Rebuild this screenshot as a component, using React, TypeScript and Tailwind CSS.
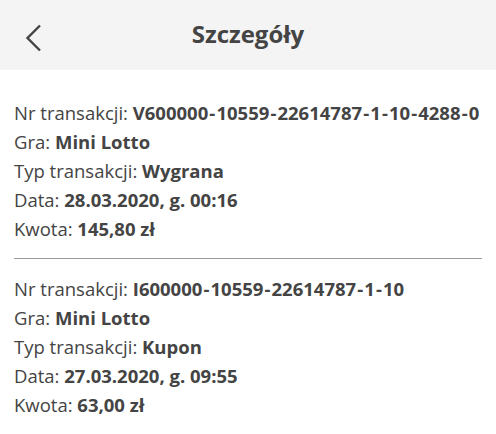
import React from "react";

const rows1: [string, string][] = [
  ["Nr transakcji: ", "V600000-10559-22614787-1-10-4288-0"],
  ["Gra: ", "Mini Lotto"],
  ["Typ transakcji: ", "Wygrana"],
  ["Data: ", "28.03.2020, g. 00:16"],
  ["Kwota: ", "145,80 zł"],
];
const rows2: [string, string][] = [
  ["Nr transakcji: ", "I600000-10559-22614787-1-10"],
  ["Gra: ", "Mini Lotto"],
  ["Typ transakcji: ", "Kupon"],
  ["Data: ", "27.03.2020, g. 09:55"],
  ["Kwota: ", "63,00 zł"],
];

function Value({ v }: { v: string }) {
  const parts = v.split("-");
  return (
    <span className="font-bold">
      {parts.map((p, i) => (
        <React.Fragment key={i}>
          {i > 0 && <span className="mx-[1.1px]">-</span>}
          {p}
        </React.Fragment>
      ))}
    </span>
  );
}

function Block({ rows }: { rows: [string, string][] }) {
  return (
    <div className="flex flex-col">
      {rows.map(([l, v], i) => (
        <div key={i} className="text-[18.5px] leading-[29px] whitespace-nowrap">
          {l}
          <Value v={v} />
        </div>
      ))}
    </div>
  );
}

export default function App() {
  return (
    <div
      className="w-[496px] h-[434px] bg-white text-[#444444]"
      style={{ fontFamily: '"Open Sans", sans-serif' }}
    >
      <div className="h-[70px] bg-[#f4f4f4] relative flex items-center justify-center pb-[3px]">
        <svg
          className="absolute left-[24px] top-[24px]"
          width="20"
          height="28"
          viewBox="0 0 20 28"
          fill="none"
        >
          <path d="M16 1.5 L3.5 14 L16 26.5" stroke="#444444" strokeWidth="2.4" />
        </svg>
        <div className="text-[24px] font-bold text-[#444444]">Szczegóły</div>
      </div>
      <div className="px-[14px] pt-[28px]">
        <Block rows={rows1} />
        <div className="h-px bg-[#9a9a9a] my-[15px] w-[468px]" />
        <Block rows={rows2} />
      </div>
    </div>
  );
}
